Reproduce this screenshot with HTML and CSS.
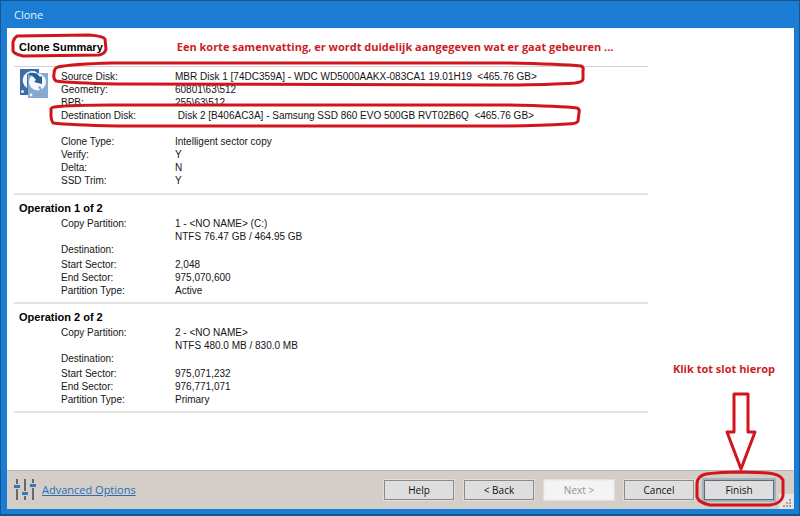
FILE: index.html
```html
<!DOCTYPE html>
<html lang="nl">
<head>
<meta charset="utf-8">
<title>Clone</title>
<link rel="stylesheet" href="styles.css">
</head>
<body>
<div class="window">
  <header class="titlebar">Clone</header>
  <main class="content">
    <div class="report">
      <div class="heading-row">
        <h1 class="heading">Clone Summary</h1>
        <p class="note">Een korte samenvatting, er wordt duidelijk aangegeven wat er gaat gebeuren ...</p>
      </div>
      <section class="summary">
        <svg class="disk-icon" viewBox="0 0 28 30" aria-hidden="true">
          <path fill="#3e6ca3" d="M0 0h19v26H0z"/>
          <circle cx="2.500" cy="22.500" r="1.500" fill="#e8f0f8"/>
          <path fill="#f4f8fc" d="M17 3.500A8.500 8.500 0 0 0 7 19z"/>
          <path fill="#85a9d0" d="M8 4h20v25H8z"/>
          <circle cx="17.500" cy="13" r="8.500" fill="#f4f8fc"/>
          <circle cx="11" cy="26" r="1.400" fill="#f4f8fc"/>
          <path fill="none" stroke="#3e6ca3" d="M7.500 5v16"/>
          <path fill="#85a9d0" d="M18 18l2-1 4 7-1 1z"/>
          <path fill="#285f94" d="M9 4c5-1 9 0 11 4l2-1v8l-8-2 2-2c-2-3-4-5-7-5z"/>
        </svg>
        <dl class="facts">
          <dt>Source Disk:</dt><dd>MBR Disk 1 [74DC359A] - WDC WD5000AAKX-083CA1 19.01H19 &nbsp;&lt;465.76 GB&gt;</dd>
          <dt>Geometry:</dt><dd>60801\63\512</dd>
          <dt>BPB:</dt><dd>255\63\512</dd>
          <dt>Destination Disk:</dt><dd>&nbsp;Disk 2 [B406AC3A] - Samsung SSD 860 EVO 500GB RVT02B6Q &nbsp;&lt;465.76 GB&gt;</dd>
        </dl>
        <dl class="facts">
          <dt>Clone Type:</dt><dd>Intelligent sector copy</dd>
          <dt>Verify:</dt><dd>Y</dd>
          <dt>Delta:</dt><dd>N</dd>
          <dt>SSD Trim:</dt><dd>Y</dd>
        </dl>
      </section>
      <section class="operation">
        <h2 class="heading">Operation 1 of 2</h2>
        <dl class="facts">
          <dt>Copy Partition:</dt><dd>1 - &lt;NO NAME&gt; (C:)<br>NTFS 76.47 GB / 464.95 GB</dd>
          <dt>Destination:</dt><dd></dd>
        </dl>
        <dl class="facts">
          <dt>Start Sector:</dt><dd>2,048</dd>
          <dt>End Sector:</dt><dd>975,070,600</dd>
          <dt>Partition Type:</dt><dd>Active</dd>
        </dl>
      </section>
      <section class="operation">
        <h2 class="heading">Operation 2 of 2</h2>
        <dl class="facts">
          <dt>Copy Partition:</dt><dd>2 - &lt;NO NAME&gt;<br>NTFS 480.0 MB / 830.0 MB</dd>
          <dt>Destination:</dt><dd></dd>
        </dl>
        <dl class="facts">
          <dt>Start Sector:</dt><dd>975,071,232</dd>
          <dt>End Sector:</dt><dd>976,771,071</dd>
          <dt>Partition Type:</dt><dd>Primary</dd>
        </dl>
      </section>
      <svg class="marks" width="590" height="100" viewBox="0 0 590 100" aria-hidden="true">
        <path d="M10 8L82 7Q96 8 98 11L99 21Q98 26 92 27L16 28Q7 26 6 23L6 14Q7 10 10 8Z"/>
        <path d="M51 39Q65 36 105 35L500 35Q555 36 574 38Q577 39 576 43L576 51Q576 54 568 55Q540 57 490 57L110 56Q62 55 49 53Q46 51 47 46Q47 40 51 39Z"/>
        <path d="M47 79Q65 77 105 77L500 77Q555 78 570 80Q573 81 572 85L571 93Q570 96 560 96Q530 98 490 98L110 98Q62 97 46 95Q44 92 44 88L44 81Q45 79 47 79Z"/>
      </svg>
    </div>
  </main>
  <footer class="footer">
    <a class="advanced" href="#advanced">
      <svg width="22" height="22" viewBox="0 0 22 22" aria-hidden="true">
        <path fill="#68696b" d="M2 0h2v21H2zM10 0h2v21h-2zM18 0h2v21h-2z"/>
        <path fill="#3c75b5" stroke="#d3cec8" stroke-width="1" d="M-.5 5.500h7v4h-7zM7.500 12.500h7v4h-7zM15.500 4.500h7v4h-7z"/>
      </svg>
      <span>Advanced Options</span>
    </a>
    <div class="buttons">
      <button type="button">Help</button>
      <button type="button">&lt; Back</button>
      <button type="button" disabled>Next &gt;</button>
      <button type="button">Cancel</button>
      <div class="finish">
        <button type="button" class="default">Finish</button>
        <p class="note finish-note">Klik tot slot hierop</p>
        <svg class="finish-mark" width="90" height="116" viewBox="0 0 90 116" aria-hidden="true">
          <path d="M38 2H52V40H59L45 77L31 40H38Z"/>
          <path d="M10 82Q25 80 44 80L72 81Q84 82 87 88L87 104Q85 112 74 113L14 113Q3 111 1 105L1 92Q1 84 10 82Z"/>
        </svg>
      </div>
    </div>
    <svg class="grip" width="15" height="15" viewBox="0 0 15 15" aria-hidden="true">
      <path fill="#e6e5e4" d="M0 0h15v15H0z"/>
      <path fill="#a5a19c" d="M10 5h2v2h-2zM7 8h2v2H7zM10 8h2v2h-2zM4 11h2v2H4zM7 11h2v2H7zM10 11h2v2h-2z"/>
    </svg>
  </footer>
</div>
</body>
</html>
```
FILE: styles.css
```css
* {
  box-sizing: border-box;
}

body,
h1,
h2,
p,
dl,
dd {
  margin: 0;
}

body {
  font: 10px/13px "Liberation Sans", Arial, sans-serif;
  color: #141414;
}

.window {
  display: flex;
  flex-direction: column;
  min-height: 100vh;
  padding: 0 5px 5px 6px;
  border: 1px solid #14568f;
  border-bottom-width: 2px;
  background: #1a7dd3;
}

.titlebar {
  height: 27px;
  padding: 0 7px;
  font: 11px/28px "Open Sans", "Noto Sans", sans-serif;
  color: #e6f2fc;
}

.content {
  flex: 1;
  padding: 0 7px;
  background: #fff;
}

.report {
  position: relative;
  max-width: 634px;
}

.heading-row {
  display: flex;
  align-items: center;
  gap: 74px;
  height: 38px;
  padding-left: 5px;
}

.heading {
  font-size: 11px;
  line-height: 13px;
  font-weight: bold;
  color: #000;
  white-space: nowrap;
}

.note {
  font: bold 11px/16px "Open Sans", "Noto Sans", sans-serif;
  color: #cb1d25;
  white-space: nowrap;
}

.summary,
.operation {
  position: relative;
  border-top: 1px solid #d2d2d2;
}

.summary {
  padding: 3px 0 6px 47px;
}

.operation {
  padding: 7px 0 5px 5px;
  border-top: 2px solid #e2e2e2;
}

.operation:last-of-type {
  border-bottom: 2px solid #e2e2e2;
}

.disk-icon {
  position: absolute;
  top: 2px;
  left: 6px;
  width: 28px;
  height: 30px;
}

.facts {
  display: grid;
  grid-template-columns: 114px 1fr;
}

.facts dd {
  white-space: nowrap;
}

.summary .facts + .facts {
  margin-top: 13px;
}

.operation .facts {
  padding: 2px 0 0 42px;
}

.marks,
.finish-mark {
  position: absolute;
  overflow: visible;
  fill: none;
  stroke: #d2141c;
  stroke-width: 3px;
  stroke-linejoin: round;
}

.marks {
  top: 0;
  left: -7px;
}

.footer {
  position: relative;
  display: flex;
  align-items: center;
  justify-content: space-between;
  height: 39px;
  padding: 0 20px 0 7px;
  border-top: 1px solid #bab6b1;
  background: #d3cec8;
}

.advanced {
  display: flex;
  align-items: center;
  gap: 6px;
  font: 11px/16px "Open Sans", "Noto Sans", sans-serif;
  color: #2c6cb5;
}

.buttons {
  display: flex;
  gap: 10px;
}

.buttons button {
  display: block;
  width: 70px;
  height: 20px;
  padding: 0;
  border: 1px solid #8b8b8b;
  outline: 1px solid #e3dfda;
  background: #dedede;
  font: 10px/16px "Open Sans", "Noto Sans", sans-serif;
  color: #111;
}

.buttons button:disabled {
  border-color: #eee;
  background: #f4f4f4;
  color: #929292;
}

.buttons .default {
  border: 1px solid #5d6c78;
  outline: 2px solid #a3b1bc;
}

.finish {
  position: relative;
}

.finish-note {
  position: absolute;
  right: -1px;
  bottom: 123px;
}

.finish-mark {
  right: -12px;
  bottom: -8px;
}

.grip {
  position: absolute;
  z-index: -1;
  right: 0;
  bottom: 0;
}

.footer {
  z-index: 0;
}
```
